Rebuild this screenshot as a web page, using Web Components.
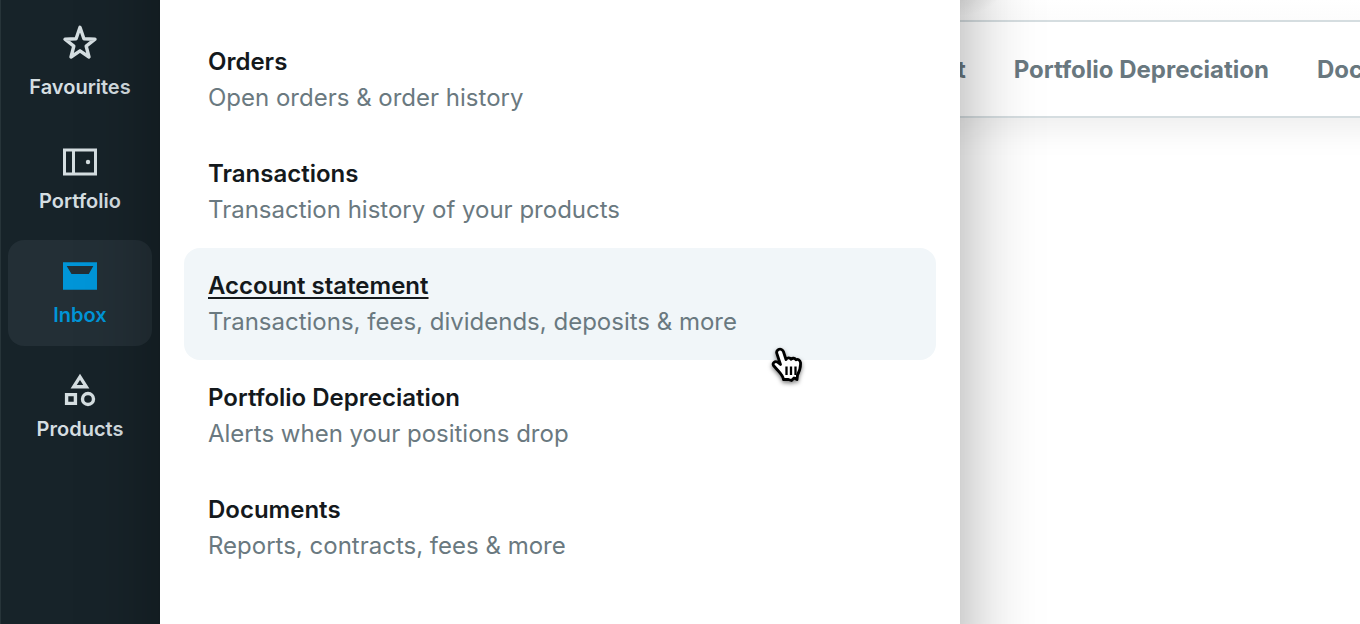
<!DOCTYPE html>
<html lang="en">
<head>
<meta charset="utf-8">
<title>Inbox</title>
<style>
html, body { margin: 0; height: 100%; }
body { font-family: Inter, sans-serif; background: #fff; overflow: hidden; }
</style>
</head>
<body>
<app-shell>
  <side-bar slot="sidebar">
    <side-item label="Favourites" icon="star"></side-item>
    <side-item label="Portfolio" icon="wallet"></side-item>
    <side-item label="Inbox" icon="inbox" active></side-item>
    <side-item label="Products" icon="shapes"></side-item>
  </side-bar>
  <flyout-menu slot="flyout">
    <menu-entry heading="Orders">Open orders &amp; order history</menu-entry>
    <menu-entry heading="Transactions">Transaction history of your products</menu-entry>
    <menu-entry heading="Account statement" active>Transactions, fees, dividends, deposits &amp; more</menu-entry>
    <menu-entry heading="Portfolio Depreciation">Alerts when your positions drop</menu-entry>
    <menu-entry heading="Documents">Reports, contracts, fees &amp; more</menu-entry>
  </flyout-menu>
  <tab-strip>
    <tab-link>Account statement</tab-link>
    <tab-link>Portfolio Depreciation</tab-link>
    <tab-link>Documents</tab-link>
  </tab-strip>
</app-shell>
<hand-cursor></hand-cursor>

<script>
const define = (name, render) => customElements.define(name, class extends HTMLElement {
  constructor() {
    super();
    this.attachShadow({ mode: 'open' }).innerHTML = render(this);
  }
});

define('app-shell', () => `
<style>
:host { position: relative; display: flex; height: 100%; min-height: 100vh; overflow: hidden; }
.stage { position: relative; flex: 1; min-width: 0; overflow: hidden; }
::slotted([slot=sidebar]) { flex: none; }
::slotted([slot=flyout]) { position: absolute; top: 0; bottom: 0; left: 160px; width: 800px; z-index: 2; }
</style>
<slot name="sidebar"></slot>
<slot name="flyout"></slot>
<main class="stage"><slot></slot></main>`);

define('side-bar', () => `
<style>
:host { display: block; box-sizing: border-box; width: 160px; background: #172329; border-left: 1px solid #273439; }
nav { display: flex; flex-direction: column; gap: 8px; padding: 12px 8px 12px 7px; }
</style>
<nav aria-label="Main"><slot></slot></nav>`);

const icons = {
  star: '<path d="M20 1.300L23.900 12.800L35 13.200L26.200 20.200L29 31L20 24.800L11 31L13.800 20.200L5 13.200L16.100 12.800Z" fill="none" stroke="currentColor" stroke-width="3.400" stroke-linejoin="round"/>',
  wallet: '<path d="M4.500 9.900H35.500V34.100H4.500ZM13.500 10V34" fill="none" stroke="currentColor" stroke-width="3"/><circle cx="28" cy="22" r="2.200" fill="currentColor"/>',
  inbox: '<path fill-rule="evenodd" fill="currentColor" d="M3 8.300H37V35.700H3ZM6.700 12L11.500 20H28.800L33.300 12Z"/>',
  shapes: '<path d="M20 8.800L26.300 18.700H13.700ZM6.600 26.600H15.400V35.400H6.600Z" fill="none" stroke="currentColor" stroke-width="3.400"/><circle cx="28" cy="31" r="5.500" fill="none" stroke="currentColor" stroke-width="3.400"/>'
};

define('side-item', el => `
<style>
:host { display: block; color: #d5dee1; }
:host([active]) { color: #0095d8; }
a { display: flex; flex-direction: column; align-items: center; gap: 8px; box-sizing: border-box; height: 106px; padding-top: 14px; border-radius: 16px; color: inherit; text-decoration: none; font-size: 20px; line-height: 26px; font-weight: 600; }
:host([active]) a { background: #232f36; }
svg { display: block; width: 40px; height: 40px; overflow: visible; }
</style>
<a href="#${el.getAttribute('icon')}"><svg viewBox="0 0 40 40" aria-hidden="true">${icons[el.getAttribute('icon')]}</svg><span>${el.getAttribute('label')}</span></a>`);

define('flyout-menu', () => `
<style>
:host { display: block; background: #fff; }
:host::before { content: ""; position: absolute; inset: -80px 0; z-index: -1; background: #fff; box-shadow: 0 0 72px rgba(0,0,0,.36); }
nav { display: flex; flex-direction: column; padding: 24px; }
</style>
<nav aria-label="Inbox"><slot></slot></nav>`);

define('menu-entry', el => `
<style>
:host { display: block; }
a { display: block; padding: 20px 24px; border-radius: 16px; color: #6a7980; text-decoration: none; font-size: 24px; line-height: 36px; }
strong { display: block; color: #14191c; font-weight: 600; }
:host([active]) a { background: #f1f6f9; }
:host([active]) strong { text-decoration: underline; text-decoration-thickness: 2px; text-underline-offset: 3px; }
</style>
<a href="#entry"><strong>${el.getAttribute('heading')}</strong><slot></slot></a>`);

define('tab-strip', () => `
<style>
:host { display: block; padding-top: 20px; background: radial-gradient(circle 56px at 800px -40px, rgba(0,0,0,.2), transparent) no-repeat, linear-gradient(#fff, #fcfcfc) 0 0 / 100% 20px no-repeat; }
nav { display: flex; gap: 48px; margin-right: -48px; padding: 28px 0 26px 582px; border-top: 2px solid #d5dde0; border-bottom: 2px solid #d5dde0; background: #fff; box-shadow: 0 12px 32px rgba(0,0,0,.07); clip-path: inset(0 0 -64px 0); white-space: nowrap; }
</style>
<nav aria-label="Inbox sections"><slot></slot></nav>`);

define('tab-link', () => `
<style>
:host { display: block; flex: none; }
a { display: block; color: #69787f; text-decoration: none; font-size: 24px; line-height: 40px; font-weight: 700; }
</style>
<a href="#tab"><slot></slot></a>`);

define('hand-cursor', () => `
<style>
:host { position: absolute; left: 768px; top: 344px; z-index: 3; pointer-events: none; }
svg { display: block; filter: drop-shadow(0 2px 2px rgba(0,0,0,.5)); }
</style>
<svg width="40" height="40" viewBox="0 0 40 40" aria-hidden="true">
<path d="M10.500 5.500C12.500 4.500 14.700 5.600 15.400 7.500L18 15.500C19 13.600 22 13.400 23 15.200C24.600 13.700 27 14 28 15.800C30 14.800 32 16 32.500 18.500C33 24 31 28 29.500 31L29 35.500L26 34L23.500 36.500L20.500 35.500H15.500C15 31.500 12 28.800 9 25.500L5.500 21.500C4.200 19.200 6.600 16.800 9.300 18L12.500 20.500L9 10C8.200 8 8.500 6.500 10.500 5.500Z" fill="#fff" stroke="#000" stroke-width="2.800" stroke-linejoin="round"/>
<path d="M18.500 22.500V31M23 22.500V31M27.500 22.500V31" stroke="#000" stroke-width="2.300"/>
</svg>`);
</script>
</body>
</html>
